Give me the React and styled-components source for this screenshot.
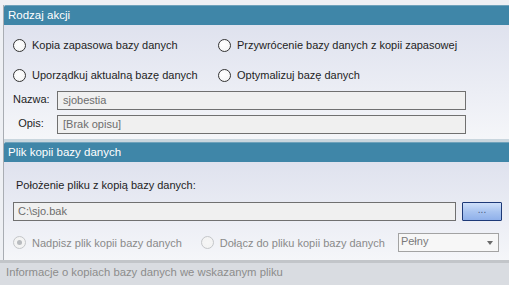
import * as React from "react";
import styled, { createGlobalStyle } from "styled-components";

const GlobalStyle = createGlobalStyle`
  body {
    margin: 0;
    font-family: "Liberation Sans", Arial, sans-serif;
    font-size: 11px;
  }
`;

const Window = styled.div`
  width: 509px;
  height: 285px;
  overflow: hidden;
  background: #eef0f4;
  padding-top: 5px;
  box-sizing: border-box;
  display: flex;
  flex-direction: column;
`;

const Panel = styled.div`
  margin-left: 3px;
  border-left: 1px solid #a9adb3;
  display: flex;
  flex-direction: column;
  flex: 1;
`;

const Header = styled.div`
  height: 20px;
  line-height: 19px;
  font-size: 11.5px;
  background: #3f86a8;
  color: #fff;
  padding-left: 4px;
  border-top-left-radius: 2px;
  border-top: 1px solid #6fa2bb;
  box-sizing: border-box;
`;

const Section = styled.div`
  height: ${(p) => p.$h}px;
  box-sizing: border-box;
  padding: ${(p) => p.$pad};
  background: linear-gradient(180deg, #dfe2ee 0%, #eceef5 60%, #f5f6f9 100%);
`;

const Divider = styled.div`
  height: 3px;
  background: #c9d6de;
`;

const RadioGrid = styled.div`
  display: grid;
  grid-template-columns: 205px 1fr;
  row-gap: 14px;
  margin: 1px 0 8px;
`;

const RadioLabel = styled.label`
  display: flex;
  align-items: center;
  gap: 6px;
  height: 16px;
  margin-right: ${(p) => p.$mr || 0}px;
  color: ${(p) => (p.$disabled ? "#8a8a8a" : "#1e1e1e")};
  white-space: nowrap;
`;

const Circle = styled.span`
  width: 13px;
  height: 13px;
  box-sizing: border-box;
  border-radius: 50%;
  border: 1px solid ${(p) => (p.$disabled ? "#c4c6c9" : "#333")};
  background: ${(p) =>
    p.$disabled
      ? "radial-gradient(circle, #f6f6f6 0%, #f1f1f1 100%)"
      : "radial-gradient(circle at 40% 40%, #ffffff 0%, #f2f2f2 100%)"};
  display: flex;
  align-items: center;
  justify-content: center;
  flex-shrink: 0;
  &::after {
    content: "";
    display: ${(p) => (p.$checked ? "block" : "none")};
    width: 5px;
    height: 5px;
    border-radius: 50%;
    background: #b8bbbf;
  }
`;

const FieldRow = styled.div`
  display: flex;
  align-items: center;
  height: 19px;
  margin-bottom: ${(p) => p.$mb || 0}px;
`;

const FieldLabel = styled.span`
  width: 36px;
  text-align: center;
  color: #1e1e1e;
  margin-top: -4px;
`;

const Input = styled.div`
  width: ${(p) => p.$w}px;
  height: 19px;
  box-sizing: border-box;
  border: 1px solid #707070;
  background: #f0f0f0;
  color: #6d6d6d;
  padding-left: ${(p) => p.$pl || 5}px;
  line-height: 17px;
  margin-left: ${(p) => p.$ml || 0}px;
`;

const Caption = styled.div`
  color: #1e1e1e;
  padding-left: 3px;
  margin-bottom: 11px;
`;

const PathRow = styled.div`
  display: flex;
  gap: 6px;
  margin-bottom: 12px;
`;

const BrowseButton = styled.div`
  width: 40px;
  height: 19px;
  box-sizing: border-box;
  border: 1px solid #1e3a78;
  border-radius: 1px;
  background: linear-gradient(180deg, #cfe0fa 0%, #a9c4f0 50%, #8fb0ea 100%);
  color: #4a5a80;
  text-align: center;
  line-height: 14px;
  font-size: 10px;
`;

const OptionsRow = styled.div`
  display: flex;
  align-items: center;
`;

const Select = styled.div`
  width: 101px;
  height: 19px;
  box-sizing: border-box;
  border: 1px solid #a3a3a3;
  background: #f7f7f7;
  color: #7a7a7a;
  padding-left: 2px;
  line-height: 14px;
  display: flex;
  justify-content: space-between;
`;

const Arrow = styled.span`
  width: 0;
  height: 0;
  border-left: 3px solid transparent;
  border-right: 3px solid transparent;
  border-top: 4px solid #6a6a6a;
  margin: 7px 5px 0 0;
`;

const Footer = styled.div`
  border-top: 3px solid #c2c5c9;
  height: 22px;
  line-height: 19px;
  background: #d9dce1;
  color: #8c8c8c;
  padding-left: 6px;
  font-size: 11.3px;
`;

const Radio = ({ label, checked, disabled, mr }) => (
  <RadioLabel $disabled={disabled} $mr={mr}>
    <Circle $checked={checked} $disabled={disabled} />
    {label}
  </RadioLabel>
);

export default function App() {
  return (
    <Window>
      <GlobalStyle />
      <Panel>
        <Header>Rodzaj akcji</Header>
        <Section $h={114} $pad="11px 0 0 9px">
          <RadioGrid>
            <Radio label="Kopia zapasowa bazy danych" />
            <Radio label="Przywrócenie bazy danych z kopii zapasowej" />
            <Radio label="Uporządkuj aktualną bazę danych" />
            <Radio label="Optymalizuj bazę danych" />
          </RadioGrid>
          <FieldRow $mb={5}>
            <FieldLabel>Nazwa:</FieldLabel>
            <Input $w={409} $ml={8}>sjobestia</Input>
          </FieldRow>
          <FieldRow>
            <FieldLabel>Opis:</FieldLabel>
            <Input $w={409} $ml={8}>[Brak opisu]</Input>
          </FieldRow>
        </Section>
        <Divider />
        <Header>Plik kopii bazy danych</Header>
        <Section $h={98} $pad="17px 0 0 9px">
          <Caption>Położenie pliku z kopią bazy danych:</Caption>
          <PathRow>
            <Input $w={443} $pl={4}>C:\sjo.bak</Input>
            <BrowseButton>...</BrowseButton>
          </PathRow>
          <OptionsRow>
            <Radio label="Nadpisz plik kopii bazy danych" checked disabled mr={19} />
            <Radio label="Dołącz do pliku kopii bazy danych" disabled mr={13} />
            <Select>
              Pełny
              <Arrow />
            </Select>
          </OptionsRow>
        </Section>
      </Panel>
      <Footer>Informacje o kopiach bazy danych we wskazanym pliku</Footer>
    </Window>
  );
}
